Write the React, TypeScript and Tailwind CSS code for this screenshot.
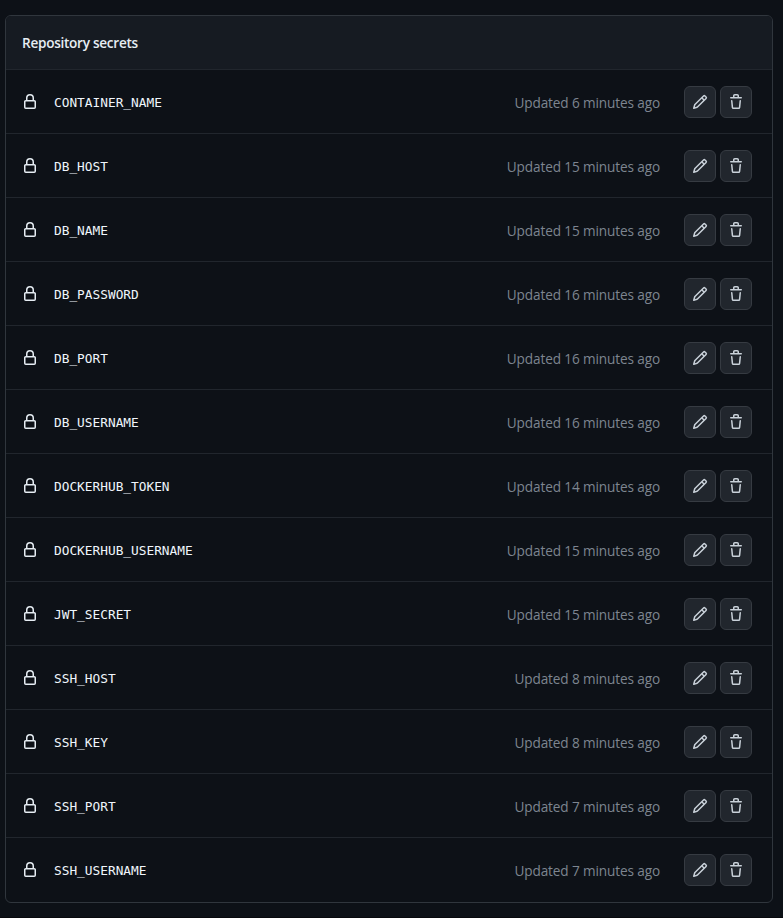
const secrets = [
  { name: "CONTAINER_NAME", minutes: 6 },
  { name: "DB_HOST", minutes: 15 },
  { name: "DB_NAME", minutes: 15 },
  { name: "DB_PASSWORD", minutes: 16 },
  { name: "DB_PORT", minutes: 16 },
  { name: "DB_USERNAME", minutes: 16 },
  { name: "DOCKERHUB_TOKEN", minutes: 14 },
  { name: "DOCKERHUB_USERNAME", minutes: 15 },
  { name: "JWT_SECRET", minutes: 15 },
  { name: "SSH_HOST", minutes: 8 },
  { name: "SSH_KEY", minutes: 8 },
  { name: "SSH_PORT", minutes: 7 },
  { name: "SSH_USERNAME", minutes: 7 },
];

const icons = {
  lock: "M4 4a4 4 0 0 1 8 0v2h.25c.966 0 1.75.784 1.75 1.75v5.5A1.75 1.75 0 0 1 12.25 15h-8.5A1.75 1.75 0 0 1 2 13.25v-5.5C2 6.784 2.784 6 3.75 6H4Zm8.25 3.5h-8.5a.25.25 0 0 0-.25.25v5.5c0 .138.112.25.25.25h8.5a.25.25 0 0 0 .25-.25v-5.5a.25.25 0 0 0-.25-.25ZM10.5 6V4a2.5 2.5 0 1 0-5 0v2Z",
  pencil:
    "M11.013 1.427a1.75 1.75 0 0 1 2.474 0l1.086 1.086a1.75 1.75 0 0 1 0 2.474l-8.61 8.61c-.21.21-.47.364-.756.445l-3.251.93a.75.75 0 0 1-.927-.928l.929-3.25c.081-.286.235-.547.445-.758l8.61-8.61Zm.176 4.823L9.75 4.81l-6.286 6.287a.253.253 0 0 0-.064.108l-.558 1.953 1.953-.558a.253.253 0 0 0 .108-.064Zm1.238-3.763a.25.25 0 0 0-.354 0L10.811 3.75l1.439 1.44 1.263-1.263a.25.25 0 0 0 0-.354Z",
  trash:
    "M11 1.75V3h2.25a.75.75 0 0 1 0 1.5H2.75a.75.75 0 0 1 0-1.5H5V1.75C5 .784 5.784 0 6.75 0h2.5C10.216 0 11 .784 11 1.75ZM4.496 6.675l.66 6.6a.25.25 0 0 0 .249.225h5.19a.25.25 0 0 0 .249-.225l.66-6.6a.75.75 0 0 1 1.492.149l-.66 6.6A1.748 1.748 0 0 1 10.595 15h-5.19a1.75 1.75 0 0 1-1.741-1.575l-.66-6.6a.75.75 0 1 1 1.492-.15ZM6.5 1.75V3h3V1.75a.25.25 0 0 0-.25-.25h-2.5a.25.25 0 0 0-.25.25Z",
};

function Icon({ name }: { name: keyof typeof icons }) {
  return (
    <svg viewBox="0 0 16 16" className="size-4 shrink-0 fill-current" aria-hidden="true">
      <path d={icons[name]} />
    </svg>
  );
}

function IconButton({ icon, label }: { icon: keyof typeof icons; label: string }) {
  return (
    <button
      aria-label={label}
      className="flex size-8 items-center justify-center rounded-md border border-[#363b42] bg-[#21262d] text-[#c9d1d9]"
    >
      <Icon name={icon} />
    </button>
  );
}

function SecretRow({ name, minutes }: { name: string; minutes: number }) {
  return (
    <li className="flex h-16 items-center border-t border-[#21262d] pr-5 pl-4 text-[#e6edf3]">
      <Icon name="lock" />
      <span className="ml-4 pt-0.5 font-['DejaVu_Sans_Mono',monospace] text-[12.8px] text-[#f0f6fc]">{name}</span>
      <span className="mr-6 ml-auto pt-1 text-[13.6px] tracking-[-0.12px] text-[#7d8590]">
        Updated {minutes} minutes ago
      </span>
      <div className="flex gap-1">
        <IconButton icon="pencil" label="Edit" />
        <IconButton icon="trash" label="Delete" />
      </div>
    </li>
  );
}

export default function App() {
  return (
    <main className="h-[918px] border-b border-[#08090d] bg-[#0d1117] pt-[15px] pr-[10px] pl-[5px] font-['Open_Sans',sans-serif]">
      <section className="overflow-hidden rounded-md border border-[#30363d] pb-px">
        <h2 className="flex h-[53px] items-center bg-[#161b22] px-4 pt-0.5 text-[13.6px] font-semibold tracking-[-0.28px] text-[#e6edf3]">
          Repository secrets
        </h2>
        <ul>
          {secrets.map((s) => (
            <SecretRow key={s.name} {...s} />
          ))}
        </ul>
      </section>
    </main>
  );
}
